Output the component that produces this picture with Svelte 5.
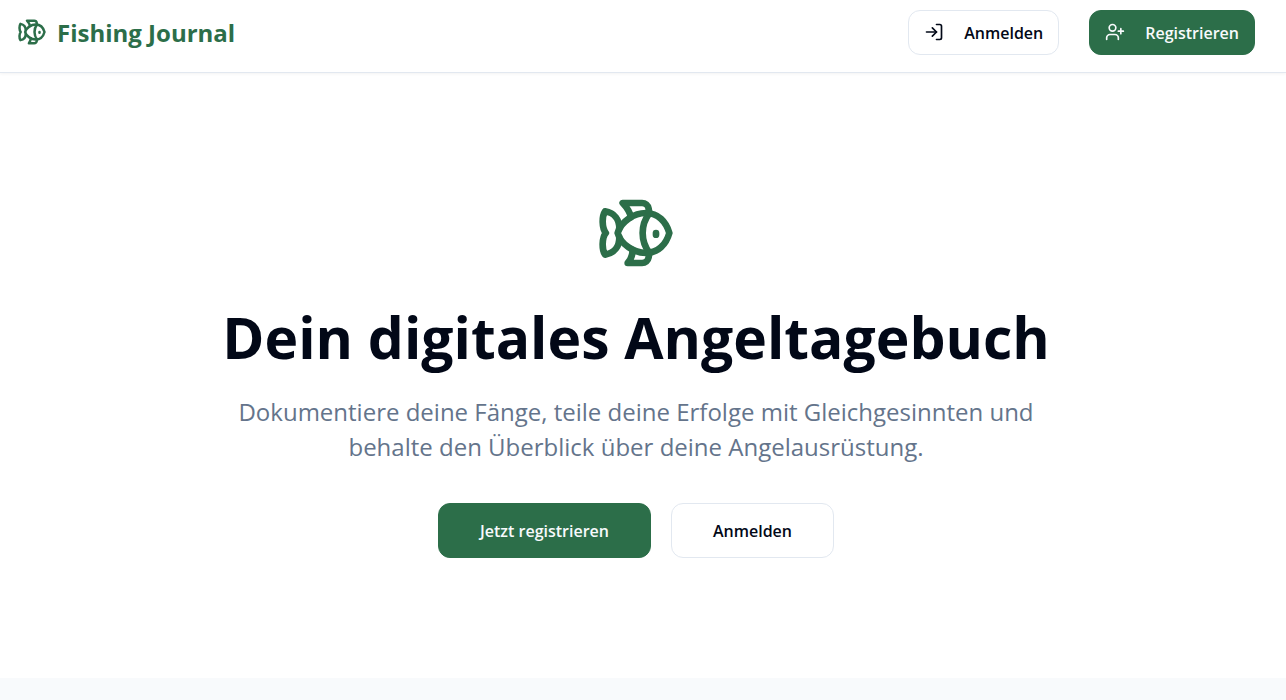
<script>
  const title = 'Fishing Journal'
</script>

{#snippet fish()}
  <svg class="fish" viewBox="0 0 24 24" aria-hidden="true">
    <path d="M6.5 12c.94-3.46 4.94-6 8.5-6 3.56 0 6.06 2.54 7 6-.94 3.47-3.44 6-7 6s-7.56-2.53-8.5-6Z" />
    <path d="M18 12v.5" />
    <path d="M16 17.93a9.77 9.77 0 0 1 0-11.86" />
    <path d="M7 10.67C7 8 5.58 5.97 2.73 5.5c-1 1.5-1 5 .23 6.5-1.24 1.5-1.24 5-.23 6.5C5.58 18.03 7 16 7 13.33" />
    <path d="M10.46 7.26C10.2 5.88 9.17 4.24 8 3h5.8a2 2 0 0 1 1.98 1.67l.23 1.4" />
    <path d="m16.01 17.93-.23 1.4A2 2 0 0 1 13.8 21H9.5a5.96 5.96 0 0 0 1.49-3.98" />
  </svg>
{/snippet}

<header>
  <a class="brand" href="/">
    {@render fish()}
    <span>{title}</span>
  </a>
  <nav>
    <button type="button" class="outline">
      <svg viewBox="0 0 24 24" aria-hidden="true">
        <path d="M15 3h4a2 2 0 0 1 2 2v14a2 2 0 0 1-2 2h-4" />
        <path d="m10 17 5-5-5-5" />
        <path d="M15 12H3" />
      </svg>
      Anmelden
    </button>
    <button type="button" class="primary">
      <svg viewBox="0 0 24 24" aria-hidden="true">
        <path d="M16 21v-2a4 4 0 0 0-4-4H6a4 4 0 0 0-4 4v2" />
        <circle cx="9" cy="7" r="4" />
        <path d="M19 8v6" />
        <path d="M22 11h-6" />
      </svg>
      Registrieren
    </button>
  </nav>
</header>

<main>
  <section class="hero">
    {@render fish()}
    <h1>Dein digitales Angeltagebuch</h1>
    <p>
      Dokumentiere deine Fänge, teile deine Erfolge mit Gleichgesinnten und
      behalte den Überblick über deine Angelausrüstung.
    </p>
    <div class="actions">
      <button type="button" class="primary large">Jetzt registrieren</button>
      <button type="button" class="outline large">Anmelden</button>
    </div>
  </section>
  <section class="features"></section>
</main>

<style>
  :global(body) {
    --primary: #2c6e49;
    --text: #020817;
    --muted: #64748b;
    --border: #e2e8f0;
    color: var(--text);
    background: #fff;
    font-family: "Segoe UI", "Open Sans", "Noto Sans", sans-serif;
  }

  svg {
    width: 20px;
    height: 20px;
    flex: none;
    fill: none;
    stroke: currentColor;
    stroke-width: 2;
    stroke-linecap: round;
    stroke-linejoin: round;
  }

  header {
    display: flex;
    justify-content: space-between;
    align-items: flex-start;
    padding: 10px 31px 17px 17px;
    border-bottom: 1px solid var(--border);
    box-shadow: 0 1px 3px rgba(0, 0, 0, .05);
  }

  .brand {
    display: flex;
    align-items: center;
    gap: 10px;
    height: 45px;
    color: var(--primary);
    font-size: 24px;
    font-weight: 700;
    text-decoration: none;
  }

  .brand .fish {
    width: 30px;
    height: 30px;
  }

  nav {
    display: flex;
    gap: 30px;
  }

  nav svg,
  .brand svg {
    margin-bottom: 2px;
  }

  button {
    display: inline-flex;
    align-items: center;
    justify-content: center;
    gap: 20px;
    height: 45px;
    padding: 0 15px;
    border: 1px solid var(--border);
    border-radius: 12px;
    font-family: inherit;
    font-size: 16px;
    font-weight: 600;
    cursor: pointer;
  }

  .outline {
    color: var(--text);
    background: #fff;
  }

  .primary {
    color: #f8fafc;
    background: var(--primary);
    border-color: var(--primary);
  }

  .large {
    height: 55px;
    padding: 0 41px;
  }

  .hero {
    display: flex;
    flex-direction: column;
    align-items: center;
    padding: 120px 34px 120px 20px;
    text-align: center;
  }

  .hero .fish {
    width: 80px;
    height: 80px;
    color: var(--primary);
  }

  h1 {
    margin: 28px 0 21px;
    font-size: 57px;
    font-weight: 700;
    line-height: 72px;
  }

  p {
    max-width: 840px;
    margin: 0 0 39px;
    color: var(--muted);
    font-size: 24px;
    line-height: 35px;
  }

  .actions {
    display: flex;
    gap: 20px;
  }

  .features {
    min-height: 22px;
    background: #f8fafc;
  }
</style>
